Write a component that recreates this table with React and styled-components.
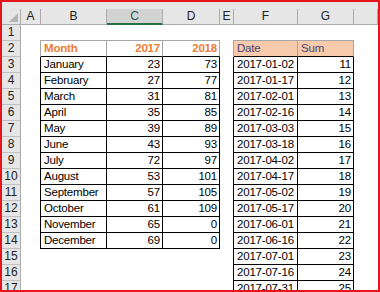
import React from 'react'
import styled, { createGlobalStyle } from 'styled-components'

const GlobalStyle = createGlobalStyle`
  body {
    margin: 0;
    background: #fff;
  }
`;

const Frame = styled.div`
  width: 380px;
  height: 292px;
  box-sizing: border-box;
  border: 2px solid #e8141b;
  background: #fff;
  overflow: hidden;
  font-family: "Liberation Sans", Arial, sans-serif;
  font-size: 11.5px;
  color: #000;
`;

const TopStrip = styled.div`
  height: 7px;
  background: #e6e6e6;
`;

const Sheet = styled.div`
  display: grid;
  grid-template-columns: 19px 20px 66px 56px 57px 14px 64px 56px 1fr;
  grid-auto-rows: 16px;
`;

const ColHead = styled.div`
  box-sizing: border-box;
  background: ${p => (p.$selected ? '#d2d2d2' : '#e6e6e6')};
  border-right: 1px solid #ababab;
  border-bottom: ${p => (p.$selected ? '2px solid #217346' : '1px solid #ababab')};
  color: ${p => (p.$selected ? '#1e5e4a' : '#222')};
  display: flex;
  align-items: center;
  justify-content: center;
  font-size: 12px;
  line-height: 15px;
  position: relative;
`;

const Corner = styled(ColHead)`
  &::after {
    content: '';
    position: absolute;
    right: 2px;
    bottom: 2px;
    width: 0;
    height: 0;
    border-left: 9px solid transparent;
    border-bottom: 9px solid #b4b4b4;
  }
`;

const RowHead = styled.div`
  box-sizing: border-box;
  background: #e6e6e6;
  border-right: 1px solid #ababab;
  border-bottom: 1px solid #bfbfbf;
  color: #222;
  text-align: center;
  font-size: 12px;
  line-height: 15px;
`;

const Cell = styled.div`
  box-sizing: border-box;
  padding: 0 2px 0 3px;
  line-height: 15px;
  letter-spacing: -0.2px;
  white-space: nowrap;
  text-align: ${p => p.$align || 'left'};
  ${p => p.$border && `
    border-right: 1px solid ${p.$head ? '#a6a6a6' : '#000'};
    border-bottom: 1px solid #000;
  `}
  ${p => {
    const shadows = [];
    if (p.$top) shadows.push('0 -1px 0 #a6a6a6');
    if (p.$left) shadows.push(`-1px 0 0 ${p.$head ? '#a6a6a6' : '#000'}`);
    if (p.$top && p.$left) shadows.push('-1px -1px 0 #a6a6a6');
    return shadows.length ? `box-shadow: ${shadows.join(', ')};` : '';
  }}
`;

const OrangeHead = styled(Cell)`
  color: #ed7d31;
  font-weight: bold;
`;

const PeachHead = styled(Cell)`
  background: #f8cbad;
  color: #4a4470;
`;

const months = [
  ['January', 23, 73],
  ['February', 27, 77],
  ['March', 31, 81],
  ['April', 35, 85],
  ['May', 39, 89],
  ['June', 43, 93],
  ['July', 72, 97],
  ['August', 53, 101],
  ['September', 57, 105],
  ['October', 61, 109],
  ['November', 65, 0],
  ['December', 69, 0],
];

const dates = [
  '2017-01-02', '2017-01-17', '2017-02-01', '2017-02-16', '2017-03-03',
  '2017-03-18', '2017-04-02', '2017-04-17', '2017-05-02', '2017-05-17',
  '2017-06-01', '2017-06-16', '2017-07-01', '2017-07-16', '2017-07-31',
];

const columns = ['A', 'B', 'C', 'D', 'E', 'F', 'G', ''];

function Row({ n }) {
  const m = months[n - 3];
  const d = dates[n - 3];
  const cells = [];

  cells.push(<Cell key="a" />);

  if (n === 2) {
    cells.push(<OrangeHead key="b" $border $head $top $left>Month</OrangeHead>);
    cells.push(<OrangeHead key="c" $border $head $top $align="right">2017</OrangeHead>);
    cells.push(<OrangeHead key="d" $border $head $top $align="right">2018</OrangeHead>);
  } else if (m) {
    cells.push(<Cell key="b" $border $left>{m[0]}</Cell>);
    cells.push(<Cell key="c" $border $align="right">{m[1]}</Cell>);
    cells.push(<Cell key="d" $border $align="right">{m[2]}</Cell>);
  } else {
    cells.push(<Cell key="b" />, <Cell key="c" />, <Cell key="d" />);
  }

  cells.push(<Cell key="e" />);

  if (n === 2) {
    cells.push(<PeachHead key="f" $border $head $top $left>Date</PeachHead>);
    cells.push(<PeachHead key="g" $border $head $top>Sum</PeachHead>);
  } else if (d) {
    cells.push(<Cell key="f" $border $left>{d}</Cell>);
    cells.push(<Cell key="g" $border $align="right">{n + 8}</Cell>);
  } else {
    cells.push(<Cell key="f" />, <Cell key="g" />);
  }

  cells.push(<Cell key="h" />);

  return (
    <>
      <RowHead>{n}</RowHead>
      {cells}
    </>
  );
}

export default function App() {
  const rows = Array.from({ length: 17 }, (_, i) => i + 1);
  return (
    <>
      <GlobalStyle />
      <Frame>
        <TopStrip />
        <Sheet>
          <Corner />
          {columns.map(c => (
            <ColHead key={c || 'h'} $selected={c === 'C'}>{c}</ColHead>
          ))}
          {rows.map(n => (
            <React.Fragment key={n}>
              <Row n={n} />
            </React.Fragment>
          ))}
        </Sheet>
      </Frame>
    </>
  );
}
